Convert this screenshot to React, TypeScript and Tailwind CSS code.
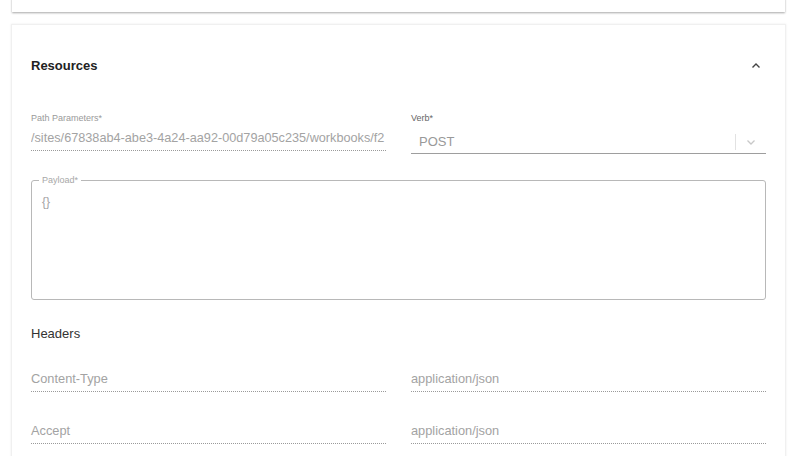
import React from "react";

const font = { fontFamily: '"Liberation Sans", Arial, Helvetica, sans-serif' };

function DottedField({ value }: { value: string }) {
  return (
    <div className="flex flex-col">
      <div className="h-[25px] flex items-end pb-[5px] text-[12.8px] leading-[15px] text-[#a3a3a3]">{value}</div>
      <div className="border-b border-dotted border-[#9a9a9a]" />
    </div>
  );
}

export default function App() {
  return (
    <div style={font} className="w-[797px] h-[456px] bg-white overflow-hidden relative">
      <div className="mx-[12px] h-[12px] bg-white shadow-[0_1px_2px_rgba(0,0,0,0.35)] -mt-[2px] box-content pt-[2px]" />
      <div className="mt-[12px] mx-[11px] border border-[#f0f0f0] shadow-[0_0_2px_rgba(0,0,0,0.08)] bg-white px-[19px] pt-[33px] pb-[40px]">
        <div className="flex items-center justify-between h-[16px]">
          <div className="text-[13px] font-bold text-[#222]">Resources</div>
          <svg width="12" height="12" viewBox="0 0 12 12" className="mr-[4px]">
            <path d="M2.5 7.5 L6 4 L9.5 7.5" fill="none" stroke="#444" strokeWidth="1.4" />
          </svg>
        </div>
        <div className="grid grid-cols-2 gap-x-[25px] mt-[39px]">
          <div className="flex flex-col">
            <div className="text-[9px] leading-[10px] text-[#9a9a9a]">Path Parameters*</div>
            <div className="mt-[5px]">
              <div className="h-[22px] flex items-end pb-[4px] text-[12.7px] leading-[15px] text-[#a3a3a3] whitespace-nowrap overflow-hidden">
                /sites/67838ab4-abe3-4a24-aa92-00d79a05c235/workbooks/f2
              </div>
              <div className="border-b border-dotted border-[#9a9a9a]" />
            </div>
          </div>
          <div className="flex flex-col">
            <div className="text-[9px] leading-[10px] text-[#666]">Verb*</div>
            <div className="mt-[4px] h-[27px] flex items-center border-b border-[#9e9e9e] pt-[4px]">
              <div className="flex-1 pl-[8px] text-[13px] text-[#999]">POST</div>
              <div className="w-px h-[16px] bg-[#e2e2e2]" />
              <div className="w-[30px] flex justify-center">
                <svg width="12" height="12" viewBox="0 0 12 12">
                  <path d="M2.5 4.5 L6 8 L9.5 4.5" fill="none" stroke="#c8c8c8" strokeWidth="1.3" />
                </svg>
              </div>
            </div>
          </div>
        </div>
        <div className="mt-[26px] relative h-[120px] border border-[#b8b8b8] rounded-[3px]">
          <div className="absolute -top-[7px] left-[7px] px-[3px] bg-white text-[9px] leading-[12px] text-[#a8a8a8]">Payload*</div>
          <div className="pl-[10px] pt-[12px] text-[12px] text-[#a3a3a3]">{"{}"}</div>
        </div>
        <div className="mt-[26px] text-[13px] leading-[15px] text-[#333]">Headers</div>
        <div className="grid grid-cols-2 gap-x-[25px] mt-[25px]">
          <DottedField value="Content-Type" />
          <DottedField value="application/json" />
        </div>
        <div className="grid grid-cols-2 gap-x-[25px] mt-[26px]">
          <DottedField value="Accept" />
          <DottedField value="application/json" />
        </div>
      </div>
    </div>
  );
}
